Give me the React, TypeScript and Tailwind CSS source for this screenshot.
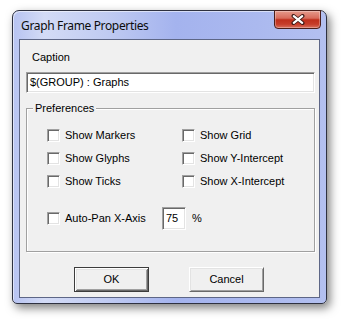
import React from "react";

const sunken =
  "border border-t-[#a0a0a0] border-l-[#a0a0a0] border-b-white border-r-white shadow-[inset_1px_1px_0_#696969,inset_-1px_-1px_0_#e3e3e3] bg-white";

function Check({ label }: { label: string }) {
  return (
    <div className="flex h-[23px] items-center gap-[5px]">
      <div className={`h-[13px] w-[13px] shrink-0 ${sunken}`} />
      <span className="whitespace-nowrap">{label}</span>
    </div>
  );
}

export default function App() {
  return (
    <div
      className="relative h-[319px] w-[344px] overflow-hidden bg-white pl-[12px] pt-[10px] text-[11px] leading-[13px] text-black"
      style={{ fontFamily: '"Liberation Sans", Arial, sans-serif' }}
    >
      <div className="relative flex h-[294px] w-[315px] flex-col rounded-t-[7px] rounded-b-[5px] border border-[#2e3140] bg-[linear-gradient(90deg,#b7c3f1_0%,#d3dbf6_10%,#c0cbf2_30%,#a4b3ee_52%,#abb9ef_78%,#b3c0f0_100%)] px-[6px] pb-[5px] shadow-[3px_4px_10px_rgba(0,0,0,0.5),inset_1px_1px_0_rgba(255,255,255,0.55)]">
        {/* title bar */}
        <div className="flex h-[28px] items-center pl-[2px] pt-[2px]">
          <span
            className="text-[12px] leading-[16px] tracking-[-0.35px] text-[#0c0c0c]"
            style={{ fontFamily: '"Noto Sans", "Open Sans", sans-serif' }}
          >
            Graph Frame Properties
          </span>
        </div>
        <div className="absolute right-[5px] top-[-1px] flex h-[19px] w-[47px] items-center justify-center rounded-b-[4px] border border-[#4a1e1a] bg-[linear-gradient(180deg,#e59a8c_0%,#d86c5c_42%,#bf2f1c_52%,#c63d2a_78%,#d9705e_100%)] shadow-[inset_0_0_0_1px_rgba(255,255,255,0.3)]">
          <svg width="14" height="11" viewBox="0 0 14 11">
            <path
              d="M2.5 2 L11.5 9 M11.5 2 L2.5 9"
              stroke="#3d1a17"
              strokeWidth="4"
              strokeLinecap="round"
            />
            <path
              d="M2.8 2.2 L11.2 8.8 M11.2 2.2 L2.8 8.8"
              stroke="#ffffff"
              strokeWidth="2.2"
              strokeLinecap="round"
            />
          </svg>
        </div>

        {/* client */}
        <div className="flex flex-1 flex-col border border-[#5d6686] bg-[#f0f0f0] px-[6px]">
          <div className="mt-[11px] h-[13px] pl-[6px]">Caption</div>
          <div className={`mt-[8px] flex h-[21px] w-[289px] items-center pl-[3px] ${sunken}`}>
            $(GROUP) : Graphs
          </div>

          <div className="relative mt-[15px] h-[144px] w-[289px] border border-[#a0a0a0] shadow-[inset_1px_1px_0_#fff,1px_1px_0_#fff]">
            <span className="absolute left-[6px] top-[-7px] bg-[#f0f0f0] px-[2px]">Preferences</span>
            <div className="flex pl-[20px] pt-[15px]">
              <div className="flex w-[135px] flex-col">
                <Check label="Show Markers" />
                <Check label="Show Glyphs" />
                <Check label="Show Ticks" />
              </div>
              <div className="flex flex-col">
                <Check label="Show Grid" />
                <Check label="Show Y-Intercept" />
                <Check label="Show X-Intercept" />
              </div>
            </div>
            <div className="mt-[14px] flex items-center pl-[20px]">
              <div className="flex h-[23px] w-[115px] items-center gap-[5px]">
                <div className={`h-[13px] w-[13px] shrink-0 ${sunken}`} />
                <span className="whitespace-nowrap">Auto-Pan X-Axis</span>
              </div>
              <div className={`flex h-[23px] w-[24px] items-center pl-[3px] ${sunken}`}>75</div>
              <span className="ml-[6px]">%</span>
            </div>
          </div>

          <div className="mt-[15px] flex justify-center gap-[40px] pr-[1px]">
            <button className="flex h-[25px] w-[75px] items-center justify-center border border-[#3c3c3c] bg-[#f0f0f0] shadow-[inset_1px_1px_0_#fff,inset_-1px_-1px_0_#696969,inset_2px_2px_0_#e3e3e3,inset_-2px_-2px_0_#a0a0a0]">
              OK
            </button>
            <button className="flex h-[25px] w-[75px] items-center justify-center border border-t-white border-l-white border-b-[#696969] border-r-[#696969] bg-[#f0f0f0] shadow-[inset_1px_1px_0_#e3e3e3,inset_-1px_-1px_0_#a0a0a0]">
              Cancel
            </button>
          </div>
        </div>
      </div>
    </div>
  );
}
